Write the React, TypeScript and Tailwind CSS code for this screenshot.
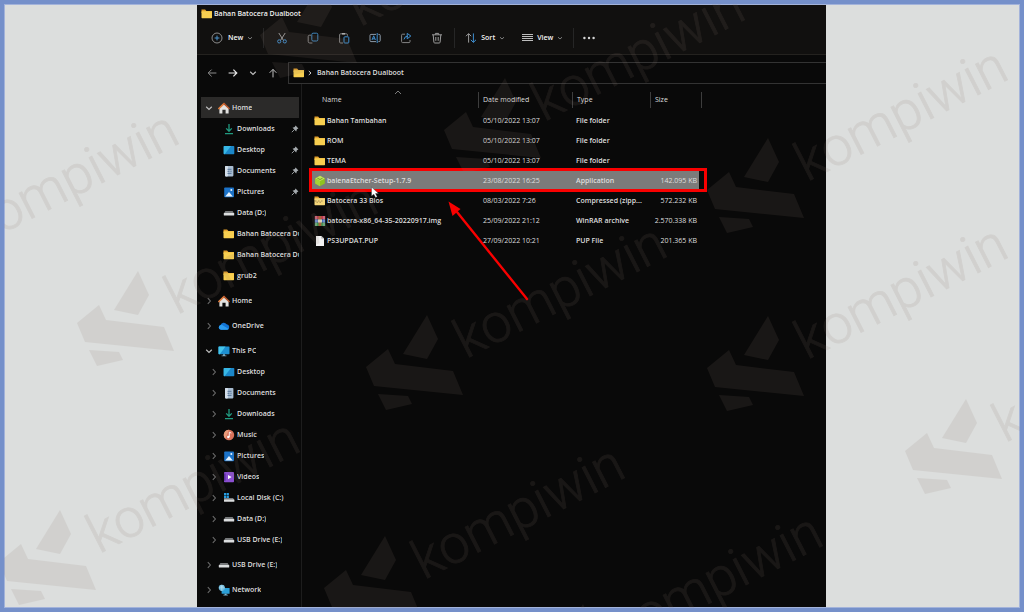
import type { ReactNode } from 'react';
import clsx from 'clsx';

type IconName =
  | 'folder'
  | 'zip'
  | 'home'
  | 'download'
  | 'desktop'
  | 'document'
  | 'picture'
  | 'drive'
  | 'localDisk'
  | 'cloud'
  | 'pc'
  | 'music'
  | 'video'
  | 'network'
  | 'etcher'
  | 'rar'
  | 'file';

interface NavItem {
  label: string;
  icon: IconName;
  level: 0 | 1;
  chevron?: 'open' | 'closed';
  pinned?: boolean;
  active?: boolean;
  spaced?: boolean;
}

interface FileRow {
  name: string;
  icon: IconName;
  date: string;
  type: string;
  size: string;
  selected?: boolean;
}

const navItems: NavItem[] = [
  { label: 'Home', icon: 'home', level: 0, chevron: 'open', active: true },
  { label: 'Downloads', icon: 'download', level: 1, pinned: true },
  { label: 'Desktop', icon: 'desktop', level: 1, pinned: true },
  { label: 'Documents', icon: 'document', level: 1, pinned: true },
  { label: 'Pictures', icon: 'picture', level: 1, pinned: true },
  { label: 'Data (D:)', icon: 'drive', level: 1 },
  { label: 'Bahan Batocera Dualboot', icon: 'folder', level: 1 },
  { label: 'Bahan Batocera Dualboot', icon: 'folder', level: 1 },
  { label: 'grub2', icon: 'folder', level: 1 },
  { label: 'Home', icon: 'home', level: 0, chevron: 'closed', spaced: true },
  { label: 'OneDrive', icon: 'cloud', level: 0, chevron: 'closed', spaced: true },
  { label: 'This PC', icon: 'pc', level: 0, chevron: 'open', spaced: true },
  { label: 'Desktop', icon: 'desktop', level: 1, chevron: 'closed' },
  { label: 'Documents', icon: 'document', level: 1, chevron: 'closed' },
  { label: 'Downloads', icon: 'download', level: 1, chevron: 'closed' },
  { label: 'Music', icon: 'music', level: 1, chevron: 'closed' },
  { label: 'Pictures', icon: 'picture', level: 1, chevron: 'closed' },
  { label: 'Videos', icon: 'video', level: 1, chevron: 'closed' },
  { label: 'Local Disk (C:)', icon: 'localDisk', level: 1, chevron: 'closed' },
  { label: 'Data (D:)', icon: 'drive', level: 1, chevron: 'closed' },
  { label: 'USB Drive (E:)', icon: 'drive', level: 1, chevron: 'closed' },
  { label: 'USB Drive (E:)', icon: 'drive', level: 0, chevron: 'closed', spaced: true },
  { label: 'Network', icon: 'network', level: 0, chevron: 'closed', spaced: true },
];

const files: FileRow[] = [
  { name: 'Bahan Tambahan', icon: 'folder', date: '05/10/2022 13:07', type: 'File folder', size: '' },
  { name: 'ROM', icon: 'folder', date: '05/10/2022 13:07', type: 'File folder', size: '' },
  { name: 'TEMA', icon: 'folder', date: '05/10/2022 13:07', type: 'File folder', size: '' },
  {
    name: 'balenaEtcher-Setup-1.7.9',
    icon: 'etcher',
    date: '23/08/2022 16:25',
    type: 'Application',
    size: '142.095 KB',
    selected: true,
  },
  { name: 'Batocera 33 Bios', icon: 'zip', date: '08/03/2022 7:26', type: 'Compressed (zipp...', size: '572.232 KB' },
  {
    name: 'batocera-x86_64-35-20220917.img',
    icon: 'rar',
    date: '25/09/2022 21:12',
    type: 'WinRAR archive',
    size: '2.570.338 KB',
  },
  { name: 'PS3UPDAT.PUP', icon: 'file', date: '27/09/2022 10:21', type: 'PUP File', size: '201.365 KB' },
];

// Top of each watermark logo
const stamps = [
  [321, -17],
  [505, 78],
  [768, 138],
  [-61, 202],
  [138, 271],
  [427, 315],
  [768, 316],
  [966, 399],
  [60, 510],
  [385, 536],
  [583, 604],
];

const glyphs: Record<IconName, ReactNode> = {
  folder: (
    <>
      <path d="M0.5 1.6h3.6l1.3 1.3h5.6v2H0.5z" fill="#e2a02c" />
      <rect x="0.5" y="3.2" width="10.5" height="7" rx="0.6" fill="#f8cf50" />
    </>
  ),
  zip: (
    <>
      <path d="M0.5 1.6h3.6l1.3 1.3h5.6v2H0.5z" fill="#e2a02c" />
      <rect x="0.5" y="3.2" width="10.5" height="7" rx="0.6" fill="#f5d678" />
      <path d="M1 6h1.5M4 6h1.5M7 6h1.5M2.5 7.2H4M5.5 7.2H7" stroke="#9a8350" strokeWidth="0.9" />
    </>
  ),
  home: (
    <>
      <path d="M1.4 5.6 6 1.8l4.6 3.8V11.400H7.600V7.800H4.400v3.600H1.400z" fill="#e2e2e0" />
      <path d="M0.900 6.500 6 1.600" fill="none" stroke="#e07b3c" strokeWidth="1.7" strokeLinecap="round" />
      <path d="M6 1.600 11.100 6.500" fill="none" stroke="#b4562c" strokeWidth="1.500" strokeLinecap="round" />
    </>
  ),
  download: (
    <path d="M6 1v7M3.2 5.4 6 8.3l2.8-2.9M2 10.6h8" fill="none" stroke="#219a80" strokeWidth="1.3" />
  ),
  desktop: (
    <>
      <rect x="0.7" y="2" width="10.6" height="8.3" rx="0.7" fill="#1b87c9" />
      <path d="M0.7 2.7q0-.7.7-.7H8L1.6 10.3q-.9 0-.9-.7z" fill="#38b8e6" />
    </>
  ),
  document: (
    <>
      <rect x="2" y="1" width="8.4" height="10.4" rx="0.8" fill="#a9bdd1" />
      <rect x="2" y="1" width="3" height="10.4" rx="0.8" fill="#d3dee9" />
      <path d="M4.5 4.3h4M4.5 6.3h2M4.5 8.4h4M8 5.7v1.4" stroke="#4c6c92" strokeWidth="0.9" />
    </>
  ),
  picture: (
    <>
      <rect x="1.2" y="1.4" width="9.8" height="9.8" rx="0.8" fill="#1b72c8" />
      <path d="M2.2 10.6 6 6.1l3.9 4.5z" fill="#e4f1fc" />
      <circle cx="8.3" cy="3.9" r="1" fill="#e4f1fc" />
    </>
  ),
  drive: (
    <>
      <path d="M2.4 4h7.2l1.6 2.4H0.8z" fill="#77797b" />
      <rect x="0.8" y="6" width="10.4" height="2.4" rx="0.5" fill="#dcdedf" />
    </>
  ),
  localDisk: (
    <>
      <path d="M1 1h2.2v2.2H1zM3.7 1h2.2v2.2H3.7zM1 3.7h2.2v2.2H1zM3.7 3.7h2.2v2.2H3.7z" fill="#279ce0" />
      <path d="M1 6h9l1.4 2H1z" fill="#77797b" />
      <rect x="1" y="7.4" width="10.4" height="2.4" rx="0.5" fill="#dcdedf" />
    </>
  ),
  cloud: (
    <>
      <path d="M3 9.8a2.5 2.5 0 0 1-.4-4.9 3.3 3.3 0 0 1 6-.6 2.8 2.8 0 0 1 .6 5.5z" fill="#1273d4" />
      <path d="M3 9.8a2.5 2.5 0 0 1-.4-4.9q1.6-.2 2.8.9L10.8 9q-.8.8-1.6.8z" fill="#2c9cf0" />
    </>
  ),
  pc: (
    <>
      <rect x="0.5" y="1.4" width="11" height="7.8" rx="0.6" fill="#1d8fd0" />
      <path d="M0.5 2q0-.6.6-.6H7.5L1.8 9.2H1q-.5 0-.5-.6z" fill="#45c4ea" />
      <path d="M5 9.2h2v1.2h1.4v.9H3.6v-.9H5z" fill="#7fa9bd" />
    </>
  ),
  music: (
    <>
      <circle cx="6" cy="6" r="5.2" fill="#d8725c" />
      <path d="M2.3 9.7A5.2 5.2 0 0 1 6 .8z" fill="#e99a79" />
      <path d="M6.3 8V3.2l2 .9" fill="none" stroke="#fff" strokeWidth="0.9" />
      <circle cx="5.3" cy="8" r="1.2" fill="#fff" />
    </>
  ),
  video: (
    <>
      <rect x="1" y="1" width="10" height="10.2" rx="0.8" fill="#8a4fd0" />
      <path d="M1 2.4h1.6v7.4H1z" fill="#5c2fa0" />
      <path d="M5 3.9v4.3L8.6 6z" fill="#fff" />
    </>
  ),
  network: (
    <>
      <rect x="3.6" y="4" width="8" height="5.8" rx="0.5" fill="#2a9fd8" />
      <path d="M6.6 9.8h2v.9h1.2v.7H5.4v-.7h1.2z" fill="#7fb6cf" />
      <circle cx="3.8" cy="3.8" r="3.1" fill="#69b9dd" />
      <path d="M1 3.8h5.6M3.8.8v6M1.8 1.8q2 1.4 4 0" fill="none" stroke="#c9e9f5" strokeWidth="0.6" />
    </>
  ),
  etcher: (
    <>
      <path d="M6 .8 10.8 3.4v5.2L6 11.3 1.2 8.6V3.4z" fill="#8fc31f" />
      <path d="M6 .8 10.8 3.4 6 6 1.2 3.4z" fill="#c4e45a" />
      <path d="M6 6v5.3L1.2 8.6V3.4z" fill="#a5d334" />
      <path d="M3.4 3.2 6 4.5l2.6-1.3" fill="none" stroke="#5d8c16" strokeWidth="0.8" />
    </>
  ),
  rar: (
    <>
      <rect x="0.8" y="1" width="10.4" height="3.4" fill="#c03a50" />
      <rect x="0.8" y="4.4" width="10.4" height="3.3" fill="#3f6fc4" />
      <rect x="0.8" y="7.7" width="10.4" height="3.3" fill="#3f9a54" />
      <rect x="4.5" y="1" width="2.8" height="10" fill="#a7653a" />
      <rect x="3.8" y="4.5" width="4.2" height="3" fill="#e3dcc4" />
      <path d="M2 1v10M10 1v10" stroke="#d8d0d8" strokeWidth="0.6" />
    </>
  ),
  file: (
    <>
      <path d="M2 1h5.4L10 3.6V11H2z" fill="#f2f2f2" />
      <path d="M7.4 1v2.6H10z" fill="#a9a9a9" />
    </>
  ),
};

function Icon({ name }: { name: IconName }) {
  return (
    <svg viewBox="0 0 12 12" className="h-3 w-3 shrink-0" aria-hidden="true">
      {glyphs[name]}
    </svg>
  );
}

function Chevron({ open }: { open: boolean }) {
  return (
    <svg viewBox="0 0 8 8" className="h-2 w-2 shrink-0" fill="none" aria-hidden="true">
      {open ? (
        <path d="M1.2 2.8 4 5.4l2.8-2.6" stroke="#bdbdbd" strokeWidth="1.2" />
      ) : (
        <path d="M2.8 1.2 5.4 4 2.8 6.8" stroke="#6b6b6b" strokeWidth="1.1" />
      )}
    </svg>
  );
}

function Pin() {
  return (
    <svg viewBox="0 0 8 8" className="ml-auto h-2 w-2 shrink-0" aria-hidden="true">
      <path d="M4.6.6 7.4 3.4 5.9 4.3 5.2 6.4 1.6 2.8 3.7 2.1z" fill="#a4a9ad" />
      <path d="M3.4 4.6.8 7.2" stroke="#a4a9ad" strokeWidth="0.9" />
    </svg>
  );
}

function SmallCaret() {
  return (
    <svg viewBox="0 0 6 6" className="h-1.5 w-1.5" fill="none" aria-hidden="true">
      <path d="M1 2.2 3 4l2-1.8" stroke="#8a8a8a" strokeWidth="0.9" />
    </svg>
  );
}

function ToolIcon({ label, children }: { label: string; children: ReactNode }) {
  return (
    <button type="button" aria-label={label} className="flex w-[31px] justify-center">
      <svg viewBox="0 0 12 12" className="h-3 w-3" fill="none" strokeWidth="1">
        {children}
      </svg>
    </button>
  );
}

function Toolbar() {
  return (
    <div className="flex h-8 items-center pl-3.5 text-[#f4f4f4]">
      <button type="button" className="flex items-center gap-1">
        <svg viewBox="0 0 12 12" className="mr-px h-3 w-3" fill="none" aria-hidden="true">
          <circle cx="6" cy="6" r="5" stroke="#9a9a9a" strokeWidth="0.9" />
          <path d="M6 3.6v4.8M3.6 6h4.8" stroke="#4d93cc" />
        </svg>
        New
        <SmallCaret />
      </button>
      <span className="ml-2.5 h-5 w-px bg-[#262626]" />
      <div className="flex px-0.5">
        <ToolIcon label="Cut">
          <path d="M2.8 1 7.6 8.6M9.2 1 4.4 8.6" stroke="#9c9c9c" />
          <circle cx="3.2" cy="9.4" r="1.6" stroke="#3f8fd0" />
          <circle cx="8.8" cy="9.4" r="1.6" stroke="#3f8fd0" />
        </ToolIcon>
        <ToolIcon label="Copy">
          <path d="M4 3.2H2.6A1.4 1.4 0 0 0 1.2 4.6v4.8a1.6 1.6 0 0 0 1.6 1.6h2.6" stroke="#858585" />
          <rect x="4.8" y="1.2" width="6" height="7.8" rx="1.3" stroke="#3f86bd" />
        </ToolIcon>
        <ToolIcon label="Paste">
          <path d="M5 11H2.6a1 1 0 0 1-1-1V2.8a1 1 0 0 1 1-1h5.8a1 1 0 0 1 1 1v1" stroke="#858585" />
          <path d="M4 1.8h3" stroke="#b5b5b5" strokeWidth="1.4" />
          <rect x="6" y="4.8" width="4.8" height="6.2" rx="0.8" stroke="#3f8fd0" />
        </ToolIcon>
        <ToolIcon label="Rename">
          <path d="M7 2.4H2a1 1 0 0 0-1 1v5.2a1 1 0 0 0 1 1h5M9.4 2.4h.8a1 1 0 0 1 1 1v5.2a1 1 0 0 1-1 1h-.8" stroke="#8d9aa8" />
          <path d="M8.2 1v10M3 8l1.700-4.200L6.400 8M3.600 6.800h2.200" stroke="#3f8fd0" />
        </ToolIcon>
        <ToolIcon label="Share">
          <path d="M5 2.2H2.6a1 1 0 0 0-1 1v6.4a1 1 0 0 0 1 1H9a1 1 0 0 0 1-1V8" stroke="#858585" />
          <path d="M4 7.4q.5-3.3 4-3.3M7.2 1.4 10.8 4 7.2 6.8z" stroke="#3f8fd0" />
        </ToolIcon>
        <ToolIcon label="Delete">
          <path d="M1 2.8h10M4.4 2.6V1.4h3.2v1.2M2.2 3l.7 7.2q.1.8.8.8h4.6q.7 0 .8-.8L9.8 3M4.8 5v3.8M7.2 5v3.8" stroke="#9c9c9c" />
        </ToolIcon>
      </div>
      <span className="h-5 w-px bg-[#262626]" />
      <button type="button" className="ml-2.5 flex items-center gap-1">
        <svg viewBox="0 0 12 12" className="h-3 w-3" fill="none" aria-hidden="true">
          <path d="M3.6 10.6V1.8M1 4.2l2.6-2.6 2.6 2.6" stroke="#9c9c9c" />
          <path d="M8.4 1.4v8.8M5.8 7.8l2.6 2.6L11 7.8" stroke="#3f8fd0" />
        </svg>
        Sort
        <SmallCaret />
      </button>
      <button type="button" className="ml-4 flex items-center gap-1">
        <svg viewBox="0 0 12 12" className="h-3 w-3" shapeRendering="crispEdges" aria-hidden="true">
          <path d="M1 2.500h11M1 4.500h11M1 6.500h11M1 8.500h11" stroke="#bdbdbd" strokeWidth="1" />
        </svg>
        View
        <SmallCaret />
      </button>
      <span className="ml-2.5 h-5 w-px bg-[#262626]" />
      <button type="button" aria-label="See more" className="ml-2">
        <svg viewBox="0 0 14 4" className="h-1 w-3.5" fill="#d6d6d6">
          <circle cx="2.4" cy="2" r="1.2" />
          <circle cx="7" cy="2" r="1.2" />
          <circle cx="11.6" cy="2" r="1.2" />
        </svg>
      </button>
    </div>
  );
}

function AddressBar() {
  return (
    <div className="flex h-[22px] items-stretch">
      <div className="flex w-[91px] shrink-0 items-center gap-[11px] pl-2.5">
        <button type="button" aria-label="Back">
          <svg viewBox="0 0 10 10" className="h-2.5 w-2.5" fill="none" stroke="#8c8c8c">
            <path d="M9.4 5H1.4M4.6 1.6 1.2 5l3.4 3.4" />
          </svg>
        </button>
        <button type="button" aria-label="Forward">
          <svg viewBox="0 0 10 10" className="h-2.5 w-2.5" fill="none" stroke="#e8e8e8" strokeWidth="1.2">
            <path d="M.6 5h8M5.4 1.6 8.8 5 5.4 8.4" />
          </svg>
        </button>
        <button type="button" aria-label="Recent locations">
          <Chevron open />
        </button>
        <button type="button" aria-label="Up">
          <svg viewBox="0 0 10 10" className="h-2.5 w-2.5" fill="none" stroke="#c0c0c0">
            <path d="M5 9.4V1.4M1.6 4.8 5 1.4l3.4 3.4" />
          </svg>
        </button>
      </div>
      <div className="flex flex-1 items-center border-y border-l border-[#333333] pl-1">
        <Icon name="folder" />
        <svg viewBox="0 0 6 6" className="mr-1 ml-0.5 h-1.5 w-1.5" fill="none" aria-hidden="true">
          <path d="M1.8 1 4 3 1.8 5" stroke="#cfcfcf" />
        </svg>
        <button type="button">Bahan Batocera Dualboot</button>
      </div>
    </div>
  );
}

function Sidebar() {
  return (
    <nav className="w-[105px] shrink-0 border-r border-[#1d1d1d] pt-[13px] pl-1">
      {navItems.map((item, i) => (
        <a
          key={i}
          href="#"
          className={clsx(
            'mr-0.5 flex h-[21px] items-center overflow-hidden whitespace-nowrap',
            item.level === 0 ? 'pl-1' : 'pl-[9px]',
            item.active && 'bg-[#2b2a29]',
            item.spaced && 'mt-1',
          )}
        >
          <span className="flex w-[13px] shrink-0">
            {item.chevron && <Chevron open={item.chevron === 'open'} />}
          </span>
          <Icon name={item.icon} />
          <span className="ml-0.5 overflow-hidden">{item.label}</span>
          {item.pinned && <Pin />}
        </a>
      ))}
    </nav>
  );
}

function FileList() {
  return (
    <main className="relative flex-1 pt-[5px] pl-2.5">
      <table className="w-[390px] table-fixed border-collapse text-left">
        <colgroup>
          <col className="w-[166px]" />
          <col className="w-[94px]" />
          <col className="w-[78px]" />
          <col className="w-[49px]" />
          <col className="w-[3px]" />
        </colgroup>
        <thead>
          <tr className="h-[22px]">
            {['Name', 'Date modified', 'Type', 'Size'].map((title, i) => (
              <th key={title} scope="col" className="p-0 font-medium">
                <div
                  className={clsx(
                    'flex h-4 items-center',
                    i === 0 ? 'pl-2.5' : 'border-l border-[#3d3d3d] pl-1',
                  )}
                >
                  {title}
                </div>
              </th>
            ))}
            <td className="p-0">
              <div className="h-4 border-r border-[#3d3d3d]" />
            </td>
          </tr>
        </thead>
        <tbody>
          {files.map((file) => (
            <tr
              key={file.name}
              className={clsx('h-5', file.selected && '[&>td:not(:last-child)]:bg-[#7b7b7a]')}
            >
              <td className="p-0 pl-0.5">
                <div className="flex items-center gap-px whitespace-nowrap">
                  <Icon name={file.icon} />
                  {file.name}
                </div>
              </td>
              <td className="p-0 pl-[5px] font-medium whitespace-nowrap">{file.date}</td>
              <td className="p-0 pl-1 whitespace-nowrap">{file.type}</td>
              <td className="p-0 pr-0.5 text-right font-medium">
                <div className="flex justify-end whitespace-nowrap">{file.size}</div>
              </td>
              <td className="p-0" />
            </tr>
          ))}
        </tbody>
      </table>

      {/* Sort direction, highlight box, arrow and mouse pointer */}
      <svg
        className="pointer-events-none absolute top-0 left-0 h-60 w-[420px] overflow-visible"
        fill="none"
        aria-hidden="true"
      >
        <path d="M93 10l3-3 3 3" stroke="#8a8a8a" strokeWidth="0.9" />
        <rect x="8.5" y="85.5" width="395" height="21" stroke="#f90000" strokeWidth="3" />
        <path d="M225 215 155 128" stroke="#f90000" strokeWidth="2.4" strokeLinecap="round" />
        <path d="M146.5 117.5 158.5 125 150.5 132z" fill="#f90000" />
        <path d="M69.5 103v9l2.3-1.8 1.8 3.4 1.6-.9-1.7-3.2h3z" fill="#ffffff" stroke="#333333" strokeWidth="0.4" />
      </svg>
    </main>
  );
}

function Watermark() {
  return (
    <svg
      className="pointer-events-none absolute -top-1 -left-1 h-screen w-screen opacity-[0.125]"
      fill="#8b776e"
      aria-hidden="true"
    >
      {stamps.map(([x, y]) => (
        <g key={`${x},${y}`} transform={`translate(${x} ${y})`}>
          <path d="M0 0 11 24 0 44-24 39z" />
          <path d="M-39 34-32 49 26 56 36 80-53 71-61 52z" />
          <path d="M-49 79-19 81-15 89-41 95z" />
          <text
            transform="translate(39 44) rotate(-27)"
            fontSize="54"
            fontWeight="300"
            stroke="#8b776e"
            strokeWidth="0.8"
            className="font-[Roboto,sans-serif]"
          >
            kompiwin
          </text>
        </g>
      ))}
    </svg>
  );
}

export default function App() {
  return (
    <div className="relative flex min-h-screen overflow-hidden border-4 border-[#7590ca] bg-[#dcdedd]">
      <div className="flex flex-1 border border-[#a3b3da] pr-[193px] pl-48">
        <div className="flex flex-1 flex-col bg-[#090909] font-['Open_Sans',sans-serif] text-[7px] leading-3 font-semibold text-[#dedede]">
          <header className="border-b border-[#24221f] bg-[#11100f]">
            <div className="flex h-[17px] items-center gap-px pl-1 text-[#f0f0f0]">
              <Icon name="folder" />
              Bahan Batocera Dualboot
            </div>
            <Toolbar />
          </header>
          <div className="pt-[7px]">
            <AddressBar />
          </div>
          <div className="flex flex-1">
            <Sidebar />
            <FileList />
          </div>
        </div>
      </div>
      <Watermark />
    </div>
  );
}
